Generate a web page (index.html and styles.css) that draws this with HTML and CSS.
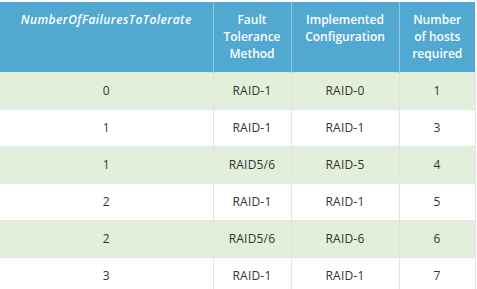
FILE: index.html
```html
<!DOCTYPE html>
<html>
<head>
<meta charset="utf-8">
<link rel="stylesheet" href="styles.css">
</head>
<body>
<table class="ftt">
  <colgroup>
    <col class="c1"><col class="c2"><col class="c3"><col class="c4">
  </colgroup>
  <thead>
    <tr>
      <th><em>NumberOfFailuresToTolerate</em></th>
      <th>Fault<br>Tolerance<br>Method</th>
      <th>Implemented<br>Configuration</th>
      <th>Number<br>of hosts<br>required</th>
    </tr>
  </thead>
  <tbody>
    <tr class="alt"><td>0</td><td>RAID-1</td><td>RAID-0</td><td>1</td></tr>
    <tr><td>1</td><td>RAID-1</td><td>RAID-1</td><td>3</td></tr>
    <tr class="alt"><td>1</td><td>RAID5/6</td><td>RAID-5</td><td>4</td></tr>
    <tr><td>2</td><td>RAID-1</td><td>RAID-1</td><td>5</td></tr>
    <tr class="alt"><td>2</td><td>RAID5/6</td><td>RAID-6</td><td>6</td></tr>
    <tr><td>3</td><td>RAID-1</td><td>RAID-1</td><td>7</td></tr>
  </tbody>
</table>
</body>
</html>
```
FILE: styles.css
```css
html, body {
  margin: 0;
  padding: 0;
  background: #ffffff;
}
body {
  padding-top: 2px;
  font-family: "Open Sans", "Liberation Sans", sans-serif;
}
.ftt {
  border-collapse: collapse;
  table-layout: fixed;
  width: 475px;
  font-size: 12px;
}
.c1 { width: 213px; }
.c2 { width: 78px; }
.c3 { width: 108px; }
.c4 { width: 76px; }
.ftt th {
  background: #51a9d2;
  color: #ffffff;
  font-weight: 600;
  line-height: 17px;
  height: 70px;
  padding: 9px 4px 0;
  box-sizing: border-box;
  vertical-align: top;
  text-align: center;
  border-left: 1px solid #8fc7e2;
}
.ftt th:first-child { border-left: none; }
.ftt th em {
  font-style: italic;
  letter-spacing: 0.45px;
}
.ftt td {
  height: 36px;
  padding: 0 4px;
  text-align: center;
  vertical-align: middle;
  color: #333333;
  letter-spacing: 0.2px;
  border-left: 1px solid #e4e4e4;
  border-top: 1px solid #e4e4e4;
}
.ftt td:first-child { border-left: none; }
.ftt td:last-child { border-right: 1px solid #e4e4e4; }
.ftt tr.alt td { background: #e2efda; }
```
